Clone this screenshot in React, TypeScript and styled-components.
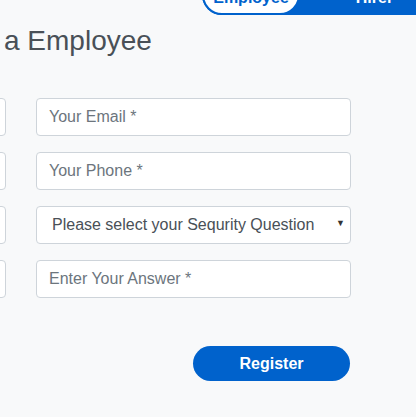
import React from "react";
import styled, { createGlobalStyle } from "styled-components";

const Global = createGlobalStyle`
  html, body { margin: 0; padding: 0; }
  body {
    background: #f8f9fa;
    font-family: "Liberation Sans", Arial, sans-serif;
    overflow: hidden;
    width: 416px;
    height: 417px;
  }
`;

const Page = styled.div`
  display: flex;
  flex-direction: column;
  width: 416px;
  overflow: hidden;
`;

const TabBar = styled.div`
  display: flex;
  align-self: flex-start;
  margin-left: 202px;
  margin-top: -25px;
  height: 40px;
  width: 260px;
  background: #0062cc;
  border-radius: 20px;
`;

const Tab = styled.div<{ $active?: boolean }>`
  box-sizing: border-box;
  display: flex;
  align-items: center;
  justify-content: center;
  height: 40px;
  width: ${(p) => (p.$active ? "98px" : "149px")};
  border-radius: 20px;
  font-size: 16px;
  font-weight: 700;
  padding-top: 5px;
  color: ${(p) => (p.$active ? "#0062cc" : "#ffffff")};
  background: ${(p) => (p.$active ? "#ffffff" : "transparent")};
  border: ${(p) => (p.$active ? "2px solid #0062cc" : "none")};
`;

const Heading = styled.h2`
  margin: 9px 0 0 4px;
  font-size: 28px;
  font-weight: 400;
  line-height: 33.6px;
  color: #495057;
  white-space: nowrap;
`;

const FormGrid = styled.div`
  display: grid;
  grid-template-columns: 315px 315px;
  column-gap: 30px;
  row-gap: 16px;
  margin-left: -309px;
  margin-top: 40px;
`;

const Input = styled.input`
  box-sizing: border-box;
  height: 38px;
  width: 100%;
  padding: 6px 12px;
  font-family: "Liberation Sans", Arial, sans-serif;
  font-size: 16px;
  color: #495057;
  background: #fff;
  border: 1px solid #ced4da;
  border-radius: 4px;
  outline: none;
  &::placeholder { color: #6c757d; opacity: 1; }
`;

const SelectWrap = styled.div`
  position: relative;
`;

const Select = styled.select`
  box-sizing: border-box;
  appearance: none;
  -webkit-appearance: none;
  height: 38px;
  width: 100%;
  padding: 6px 12px 6px 15px;
  font-family: "Liberation Sans", Arial, sans-serif;
  font-size: 16px;
  color: #495057;
  background: #fff;
  border: 1px solid #ced4da;
  border-radius: 4px;
  outline: none;
`;

const Caret = styled.span`
  position: absolute;
  right: 6px;
  top: 12px;
  font-size: 9px;
  color: #333;
  pointer-events: none;
`;

const Actions = styled.div`
  display: flex;
  justify-content: flex-end;
  width: 350px;
  margin-top: 48px;
`;

const Button = styled.button`
  box-sizing: border-box;
  width: 157px;
  height: 35px;
  border: none;
  border-radius: 18px;
  background: #0062cc;
  color: #fff;
  font-family: "Liberation Sans", Arial, sans-serif;
  font-size: 16px;
  font-weight: 700;
  padding: 2px 0 0;
`;

export default function App() {
  return (
    <>
      <Global />
      <Page>
        <TabBar>
          <Tab $active>Employee</Tab>
          <Tab>Hirer</Tab>
        </TabBar>
        <Heading>a Employee</Heading>
        <FormGrid>
          <Input placeholder="First Name *" />
          <Input placeholder="Your Email *" />
          <Input placeholder="Last Name *" />
          <Input placeholder="Your Phone *" />
          <Input placeholder="Password *" />
          <SelectWrap>
            <Select defaultValue="">
              <option value="">Please select your Sequrity Question</option>
            </Select>
            <Caret>▼</Caret>
          </SelectWrap>
          <Input placeholder="Confirm Password *" />
          <Input placeholder="Enter Your Answer *" />
        </FormGrid>
        <Actions>
          <Button>Register</Button>
        </Actions>
      </Page>
    </>
  );
}
